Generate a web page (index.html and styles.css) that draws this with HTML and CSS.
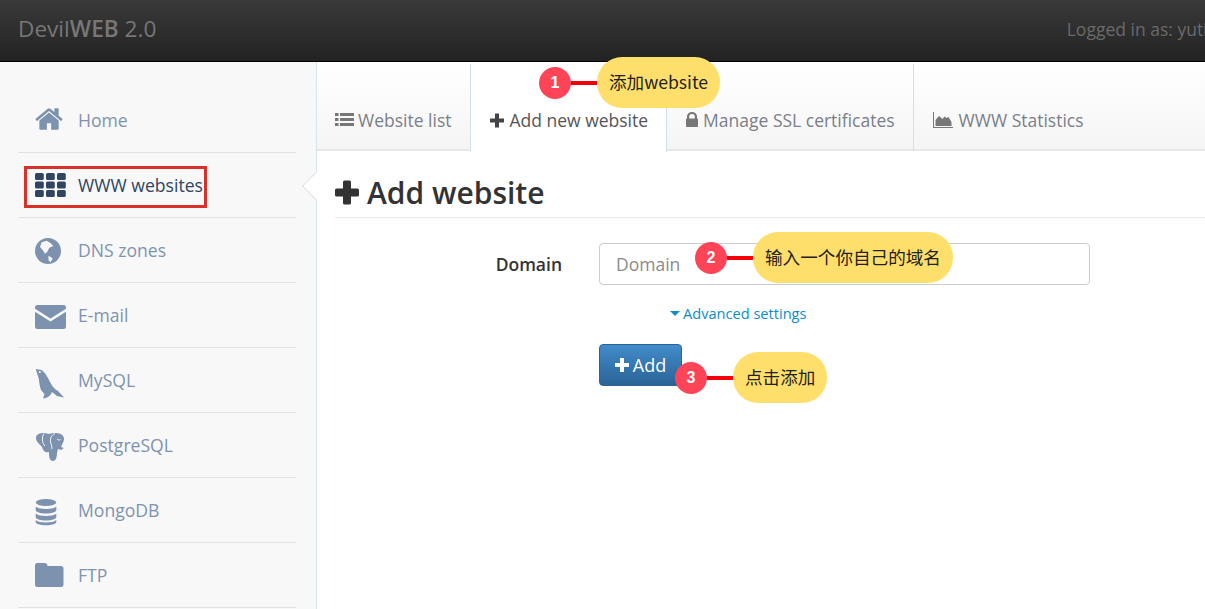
FILE: index.html
```html
<!DOCTYPE html>
<html lang="en">
<head>
<meta charset="utf-8">
<title>DevilWEB 2.0</title>
<link rel="stylesheet" href="styles.css">
</head>
<body>
<header class="topbar">
  <div class="brand">Devil<span class="brand-strong">WEB</span> 2.0</div>
  <div class="login">Logged in as: yutian</div>
</header>
<div class="main">
  <nav class="sidebar">
    <ul class="menu">
      <li class="menu-item"><svg class="mi" viewBox="60 0 1850 1910"><path d="M1472 992v480q0 26-19 45t-45 19h-384v-384h-256v384h-384q-26 0-45-19t-19-45v-480q0-1 .5-3t.5-3l575-474 575 474q1 2 1 6zm223-69l-62 74q-8 9-21 11h-3q-13 0-21-7l-692-577-692 577q-12 8-24 7-13-2-21-11l-62-74q-8-10-7-23.5t11-21.5l719-599q32-26 76-26t76 26l244 204v-195q0-14 9-23t23-9h192q14 0 23 9t9 23v408l219 182q10 8 11 21.5t-7 23.5z"/></svg><span class="mt">Home</span></li>
      <li class="menu-item active"><span class="mark"></span><svg class="mi" viewBox="0 0 31 32"><rect x="0" y="4" width="8.800" height="7" rx="1.600"/><rect x="11" y="4" width="8.800" height="7" rx="1.600"/><rect x="22" y="4" width="8.800" height="7" rx="1.600"/><rect x="0" y="12.500" width="8.800" height="7" rx="1.600"/><rect x="11" y="12.500" width="8.800" height="7" rx="1.600"/><rect x="22" y="12.500" width="8.800" height="7" rx="1.600"/><rect x="0" y="21" width="8.800" height="7" rx="1.600"/><rect x="11" y="21" width="8.800" height="7" rx="1.600"/><rect x="22" y="21" width="8.800" height="7" rx="1.600"/></svg><span class="mt">WWW websites</span></li>
      <li class="menu-item"><svg class="mi" viewBox="0 0 31 32"><circle cx="13" cy="17" r="13"/><path class="cut" d="M6.700 8.300L11.700 6.700 15.700 9.300 18.300 12 14.300 13.700 12.300 17.700 10 19.700 7.700 16 5 13z"/><path class="cut" d="M13.300 21.700L17.700 24.300 15.700 28.300 13.700 26.300z"/></svg><span class="mt">DNS zones</span></li>
      <li class="menu-item"><svg class="mi" viewBox="0 0 31 32"><path d="M2.500 6h26A2.500 2.500 0 0 1 31 8.500v1.300L15.500 19.500 0 9.800V8.500A2.500 2.500 0 0 1 2.500 6z"/><path d="M0 12.800l15.500 9.700L31 12.800v14.700a2.500 2.500 0 0 1-2.500 2.500h-26A2.500 2.500 0 0 1 0 27.500z"/></svg><span class="mt">E-mail</span></li>
      <li class="menu-item"><svg class="mi" viewBox="0 0 31 32"><path d="M.7 5L6.700 6C9 7.500 11 10.500 13 14C15 18 17.500 23 20 25L23 27L29 33.500L22 32L17 28C16 31 13 34 8 34.500L9.500 30L6 26C4 21 4.500 16 3 12z"/><circle class="cut" cx="4.800" cy="8" r="1"/></svg><span class="mt">MySQL</span></li>
      <li class="menu-item"><svg class="mi" viewBox="0 0 31 32"><path d="M1 9C1 5 5 4 9 4C11 4 13 5 14 5C16 4 18 4 20 4C25 4 29 6 29 10C29 13 27 15 26 18L29 19L26 21L23 20L22 24C22 28 21 32 18 32C15 32 14 29 14 24V23C10 24 8 22 7 18C5 15 1 13 1 9Z"/><path class="line" d="M9 4.500C6.500 8 7 14 10 17M20 4.500C16.500 6 15 9 15.500 13C16 15 17 17 17 20M25.500 10.500C24.500 11.500 23 11 22 10"/></svg><span class="mt">PostgreSQL</span></li>
      <li class="menu-item"><svg class="mi" viewBox="0 0 31 32"><ellipse cx="11" cy="8.500" rx="10.300" ry="3.500"/><path d="M.7 12.500c2 1.800 6 2.500 10.300 2.500s8.300-.7 10.300-2.500V16c0 2-4.600 3.500-10.300 3.500S.7 18 .7 16z"/><path d="M.7 19.500c2 1.800 6 2.500 10.300 2.500s8.300-.7 10.300-2.500V23c0 2-4.600 3.500-10.300 3.500S.7 25 .7 23z"/><path d="M.7 26c2 1.800 6 2.500 10.300 2.500s8.300-.7 10.300-2.500v2c0 2-4.600 3.200-10.300 3.200S.7 30 .7 28z"/></svg><span class="mt">MongoDB</span></li>
      <li class="menu-item"><svg class="mi" viewBox="0 0 31 32"><path d="M2.500 4h7A3 3 0 0 1 12.500 7h13.500a2.500 2.500 0 0 1 2.500 2.500v16a2.500 2.500 0 0 1-2.500 2.500H2.500A2.500 2.500 0 0 1 0 25.500v-19A2.500 2.500 0 0 1 2.500 4z"/></svg><span class="mt">FTP</span></li>
    </ul>
    <span class="pointer"></span>
  </nav>
  <main class="content">
    <div class="tabs">
      <a class="tab"><svg class="ti ti-list" viewBox="0 0 19 15"><path d="M0 1h3.500v3H0zM5 1h14v3H5zM0 6h3.500v3H0zM5 6h14v3H5zM0 11h3.500v3H0zM5 11h14v3H5z"/></svg>Website list</a>
      <a class="tab tab-active"><svg class="ti ti-plus" viewBox="0 0 14 14"><path d="M5 0h4v5h5v4H9v5H5V9H0V5h5z"/></svg>Add new website</a>
      <a class="tab"><svg class="ti ti-lock" viewBox="0 0 12 15"><path d="M1 6.500V4.500a5 4.500 0 0 1 10 0v2c.6 0 1 .4 1 1V14c0 .6-.4 1-1 1H1c-.6 0-1-.4-1-1V7.500c0-.6.4-1 1-1zm2.200 0h5.600V4.500a2.800 2.600 0 0 0-5.600 0z"/></svg>Manage SSL certificates</a>
      <a class="tab"><svg class="ti ti-area" viewBox="0 0 20 16"><path d="M0 0h1v15h19v1H0z"/><path d="M2.500 14V8l3.500-4 3.500 3 2-2.500 2 1.500 2-1 3 5v4z"/></svg>WWW Statistics</a>
    </div>
    <section class="page">
      <h1 class="title"><svg class="title-icon" viewBox="0 0 24 25"><path d="M8 2a1.500 1.500 0 0 1 1.500-1.500h5A1.500 1.500 0 0 1 16 2v6.500h6.500A1.500 1.500 0 0 1 24 10v5a1.500 1.500 0 0 1-1.500 1.500H16V23a1.500 1.500 0 0 1-1.500 1.500h-5A1.500 1.500 0 0 1 8 23v-6.500H1.500A1.500 1.500 0 0 1 0 15v-5a1.500 1.500 0 0 1 1.500-1.500H8z"/></svg>Add website</h1>
      <form class="form">
        <label class="label" for="domain">Domain</label>
        <input class="input" id="domain" type="text" placeholder="Domain">
        <div class="advanced"><span class="caret"></span>Advanced settings</div>
        <button class="btn" type="button"><svg class="btn-icon" viewBox="0 0 14 14"><path d="M5 0h4v5h5v4H9v5H5V9H0V5h5z"/></svg>Add</button>
      </form>
    </section>
  </main>
</div>
<div class="note note-1"><span class="dot">1</span><span class="wire"></span><span class="bubble">添加website</span></div>
<div class="note note-2"><span class="dot">2</span><span class="wire"></span><span class="bubble">输入一个你自己的域名</span></div>
<div class="note note-3"><span class="dot">3</span><span class="wire"></span><span class="bubble">点击添加</span></div>
</body>
</html>
```
FILE: styles.css
```css
* { box-sizing: border-box; }
html, body { margin: 0; height: 100%; overflow: hidden; }
body { font-family: "Open Sans", "Noto Sans", sans-serif; color: #333; background: #fff; position: relative; }

.topbar { height: 62px; display: flex; justify-content: space-between; align-items: center; padding: 0 0 4px 18px; background: linear-gradient(#3a3a3a, #222); border-bottom: 1px solid #000; white-space: nowrap; overflow: hidden; }
.brand { font-size: 22.6px; color: #777; }
.brand-strong { font-weight: 600; }
.login { font-size: 17.5px; color: #6a6a6a; margin-right: -23px; flex: none; }

.main { display: flex; height: 547px; }
.sidebar { width: 317px; flex: none; background: #f8f8f8; border-right: 1px solid #d9e3ec; padding: 26px 20px 0 18px; position: relative; }
.menu { list-style: none; margin: 0; padding: 0; }
.menu-item { height: 65px; display: flex; align-items: center; border-bottom: 1px solid #e3e3e3; font-size: 17.6px; color: #7f93ae; position: relative; padding-left: 17px; }
.mt { line-height: 1; padding-top: 2px; }
.mi { width: 31px; height: 32px; fill: #7d92ae; margin-right: 12px; flex: none; overflow: visible; }
.mi .cut { fill: #f8f8f8; }
.mi .line { fill: none; stroke: #f8f8f8; stroke-width: 1; }
.active { color: #2f4562; }
.active .mi { fill: #2f4562; }
.mark { position: absolute; left: 6px; top: 13px; width: 183px; height: 42px; border: 3px solid #d9302a; }
.pointer { position: absolute; right: -10px; top: 114px; width: 20px; height: 20px; background: #fff; border-left: 1px solid #d9e3ec; border-bottom: 1px solid #d9e3ec; transform: rotate(45deg); }

.content { flex: 1; min-width: 0; }
.tabs { display: flex; height: 89px; padding-top: 2px; background: linear-gradient(#fff, #f5f5f5); border-bottom: 2px solid #e6e9ec; }
.tab { display: flex; align-items: center; padding: 24px 18px 0 19px; border-right: 1px solid #d5dfe8; font-size: 17.5px; color: #7a7f88; height: 87px; white-space: nowrap; }
.tab:first-child { padding: 24px 19px 0 18px; }
.tab:last-child { border-right: 0; }
.tab-active { background: #fff; color: #555; height: 88px; }
.ti { height: 15px; fill: #777; margin-right: 4px; flex: none; }
.tab-active .ti { fill: #444; }
.ti-list { width: 19px; }
.ti-plus { width: 14px; margin-right: 5px; }
.ti-lock { width: 12px; margin-right: 5px; }
.ti-area { width: 20px; height: 16px; margin-right: 6px; }

.page { padding: 0 0 0 18px; }
.title { margin: 21px 0 0; padding-bottom: 5px; height: 46px; border-bottom: 1px solid #e9e9e9; font-size: 30px; font-weight: 600; color: #333; display: flex; align-items: center; }
.title-icon { width: 24px; height: 25px; fill: #333; margin-right: 8px; }

.form { display: grid; grid-template-columns: 227px 491px; column-gap: 37px; margin: 25px 0 0; align-items: center; }
.label { font-size: 17.5px; font-weight: 600; text-align: right; color: #333; }
.input { height: 42px; border: 1px solid #ccc; border-radius: 4px; padding: 0 16px; font: 17.5px "Open Sans", sans-serif; color: #555; background: #fff; }
.input::placeholder { color: #8a8a8a; opacity: 1; }
.advanced { grid-column: 2; margin: 19px 0 0 71px; font-size: 14.6px; color: #0e8ccc; line-height: 19px; display: flex; align-items: center; }
.caret { width: 0; height: 0; border: 5px solid transparent; border-top-color: #0e8ccc; border-bottom: 0; margin-right: 3px; }
.btn { grid-column: 2; justify-self: start; margin-top: 21px; width: 83px; height: 42px; display: flex; align-items: center; justify-content: center; border: 1px solid #2a6496; border-radius: 4px; background: linear-gradient(#428bca, #2a6496); color: #fff; font: 18px "Open Sans", sans-serif; padding: 0; }
.btn-icon { width: 14px; height: 14px; fill: #fff; margin-right: 4px; }

.note { position: absolute; display: flex; align-items: center; height: 51px; white-space: nowrap; }
.note-1 { left: 539px; top: 57px; }
.note-2 { left: 695px; top: 232px; }
.note-3 { left: 675px; top: 352px; }
.dot { width: 32px; height: 32px; border-radius: 50%; background: #ff4458; color: #fff; font: 700 16px/32px "Liberation Sans", sans-serif; text-align: center; flex: none; }
.wire { width: 26px; height: 4px; background: #f40009; flex: none; }
.bubble { height: 51px; padding: 0 12px; border-radius: 25px; background: #ffdf6c; color: #222; font: 17.6px/50px "Noto Sans CJK SC", "Noto Sans", sans-serif; }
```
